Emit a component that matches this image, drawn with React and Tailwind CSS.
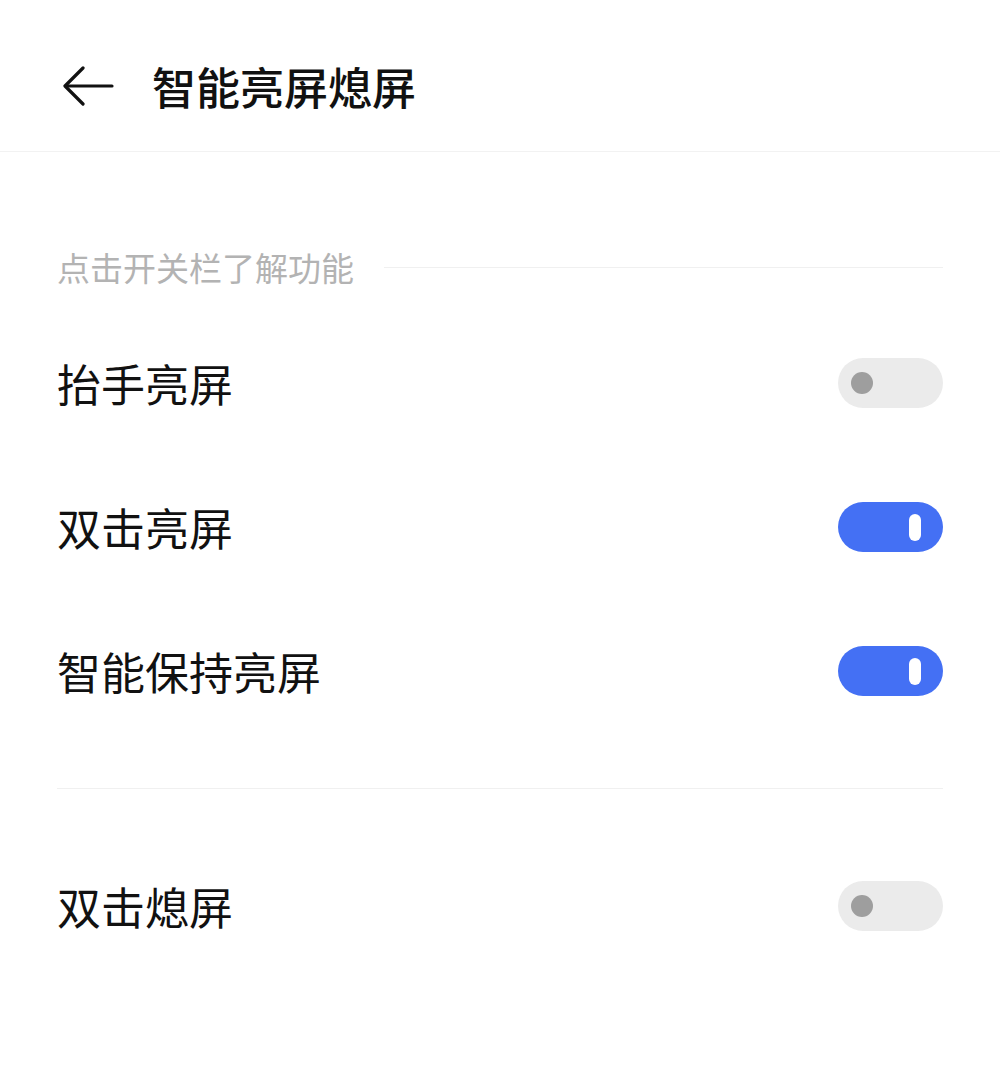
import React, { useState } from 'react';

const Toggle = ({ on, onClick }) => (
    <button
        onClick={onClick}
        className={`w-[105px] h-[50px] rounded-full flex items-center shrink-0 ${on ? 'bg-[#4470f4] justify-end pr-[22px]' : 'bg-[#ebebeb] justify-start pl-[13px]'}`}
    >
        {on ? (
            <span className="block w-[12px] h-[27px] rounded-full bg-white"></span>
        ) : (
            <span className="block w-[22px] h-[22px] rounded-full bg-[#9e9e9e]"></span>
        )}
    </button>
);

const Row = ({ label, on, onClick }) => (
    <div className="h-[144px] flex items-center justify-between px-[57px]">
        <span className="text-[44px] leading-none text-[#111]">{label}</span>
        <Toggle on={on} onClick={onClick} />
    </div>
);

const App = () => {
    const [state, setState] = useState({ raise: false, doubleOn: true, keep: true, doubleOff: false });
    const flip = (k) => setState({ ...state, [k]: !state[k] });

    return (
        <div
            className="w-[1000px] h-[1076px] bg-white overflow-hidden"
            style={{ fontFamily: '"Noto Sans CJK SC", "Noto Sans", sans-serif' }}
        >
            {/* Header */}
            <header className="h-[152px] pt-[20px] flex items-center border-b border-[#f2f2f2]">
                <svg className="ml-[62px]" width="52" height="40" viewBox="0 0 52 40" fill="none" stroke="#111" strokeWidth="3.2" strokeLinecap="round" strokeLinejoin="round">
                    <path d="M50 20 H4" />
                    <path d="M21 2 L3 20 L21 38" />
                </svg>
                <h1 className="ml-[38px] text-[44px] font-medium leading-none text-[#111]">智能亮屏熄屏</h1>
            </header>

            {/* Section label */}
            <div className="mt-[95px] h-[40px] flex items-center px-[57px]">
                <span className="text-[33px] leading-none text-[#b3b3b3]">点击开关栏了解功能</span>
                <div className="flex-1 ml-[30px] h-px bg-[#f0f0f0]"></div>
            </div>

            <div className="mt-[24px]">
                <Row label="抬手亮屏" on={state.raise} onClick={() => flip('raise')} />
                <Row label="双击亮屏" on={state.doubleOn} onClick={() => flip('doubleOn')} />
                <Row label="智能保持亮屏" on={state.keep} onClick={() => flip('keep')} />
            </div>

            <div className="mt-[45px] mx-[57px] h-px bg-[#f0f0f0]"></div>

            <div className="mt-[45px]">
                <Row label="双击熄屏" on={state.doubleOff} onClick={() => flip('doubleOff')} />
            </div>
        </div>
    );
};

export default App;
